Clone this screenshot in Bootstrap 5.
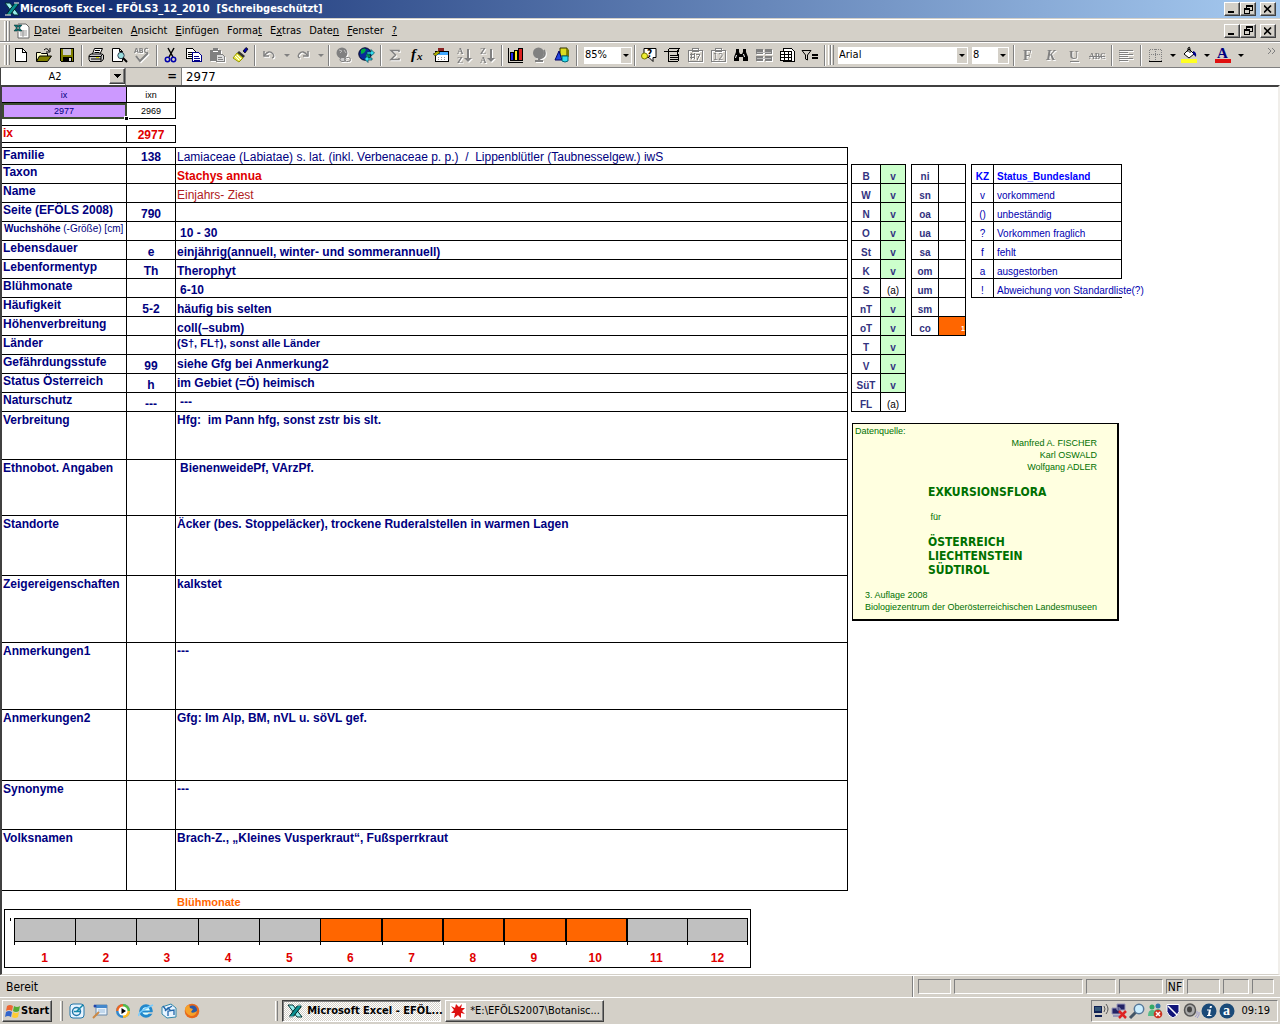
<!DOCTYPE html>
<html lang="de">
<head>
<meta charset="utf-8">
<meta name="viewport" content="width=device-width, initial-scale=1">
<title>Microsoft Excel - EFÖLS3_12_2010 [Schreibgeschützt]</title>
<link rel="stylesheet" href="https://cdn.jsdelivr.net/npm/bootstrap@5.3.0/dist/css/bootstrap.min.css">
<style>
:root{--face:#d4d0c8;--shade:#808080;--navy:#000080;--ui:"DejaVu Sans Condensed","DejaVu Sans",sans-serif;--cell:"Liberation Sans",Arial,sans-serif}
body{font-family:var(--ui);font-size:11px;line-height:14px;color:#000;background:var(--face)}
button,input,select{font:inherit;color:inherit;border-radius:0}
svg{display:block;flex:none}
.ico{width:16px;height:16px;overflow:visible}
.px{shape-rendering:crispEdges}
.titlebar{height:19px;background:linear-gradient(90deg,#0a246a,#a6caf0);border-bottom:1px solid var(--face);color:#fff;font-weight:700;white-space:pre}
.menubar{height:23px;border-top:1px solid #fff;border-bottom:1px solid var(--shade)}
.menubar a{color:#000;text-decoration:none}
.toolbars{height:26px;border-top:1px solid #fff;border-bottom:1px solid var(--shade)}
.grip{width:3px;height:20px;border-left:1px solid #fff;border-right:1px solid var(--shade);flex:none}
.tool{width:23px;height:22px;padding:0 4px 0 3px;border:0;background:none;flex:none}
.tool.off svg{filter:drop-shadow(1px 1px 0 #fff);color:var(--shade)}
.drop{width:11px;height:22px;padding:0;border:0;background:none;flex:none}
.drop.off{color:var(--shade)}
.drop::before,.pick::after{content:"";display:block;margin:0 auto;border:3px solid transparent;border-top-color:currentColor;border-bottom:0;width:0}
.vsep{width:2px;height:21px;margin:0 2px;border-left:1px solid var(--shade);border-right:1px solid #fff;flex:none}
.pick{position:relative;height:17px;background:#fff;border:1px solid #fff}
.pick select{appearance:none;border:0;background:none;padding:0;outline:0;min-width:0}
.pick::before{content:"";position:absolute;right:0;top:0;width:10px;height:15px;background:var(--face)}
.pick::after{position:absolute;right:2px;top:6px}
.pick-zoom{width:48px}
.pick-font{width:130px}
.pick-size{width:37px}
.winbtn{width:16px;height:14px;padding:0;background:var(--face);border:1px solid;border-color:#fff #404040 #404040 #fff;box-shadow:inset -1px -1px var(--shade);color:#000;display:flex;align-items:center;justify-content:center}
.formula{height:17px;background:#fff}
.formula input{border:0;outline:0;padding:0;background:#fff;min-width:0}
.namebox{width:126px;border-left:1px solid #404040;border-right:1px solid var(--shade)}
.namebox .winbtn{width:16px;height:16px}
.eq{width:56px;background:var(--face);border-right:1px solid var(--shade);font:700 13px/16px var(--ui)}
.fx{font-size:13px}
.sheet{background:#fff;border-style:solid;border-width:2px 2px 1px;border-color:#404040 #f0eeea #d4d0c8 #404040;font-family:var(--cell);font-size:12px;color:var(--navy)}
.grid{border-collapse:separate;border-spacing:0;table-layout:fixed}
.grid td,.grid th{border:0 solid #000;border-width:0 1px 1px 0;padding:0;line-height:14px;height:19px;white-space:nowrap;font-weight:700;vertical-align:bottom}
.grid.topline tr:first-child>*{border-top-width:1px}
.grid.leftline tr>:first-child{border-left-width:1px}
.c1{width:125px}.c2{width:49px}
.head td{height:16px;font-size:9px;font-weight:400;text-align:center;color:#000;vertical-align:middle}
.head .lilac{background:#c9f;color:var(--navy)}
.head .cursor{position:relative;outline:2px solid #3c4c30;outline-offset:-2px}
.cursor::after{content:"";position:absolute;right:-3px;bottom:-3px;width:5px;height:5px;background:#000;border:1px solid #fff}
.key{margin-top:6px}
.record th{vertical-align:top;padding-left:1px}
.record td:nth-child(2){text-align:center}
.record td:nth-child(3){padding-left:1px}
.record .tall>*{vertical-align:top;padding-top:1px}
.record .mid td:nth-child(3){vertical-align:middle}
.record td.in1{padding-left:4px}
.record .first>*,.key td,.key th{height:18px}
.red{color:#e00000}
.record .plain{color:var(--navy);font-weight:400}
.record .plain.red{color:#b02020}
.record .fine{font-size:10px;padding-left:2px}
.record .note{font-size:11px}
.side{width:430px;padding-top:77px}
.lists{gap:5px;margin-left:3px}
.codes td,.codes th{text-align:center;font-size:10px;color:#333380;line-height:13px}
.codes td{width:25px}
.codes th{width:30px}
.zones td,.zones th{width:27px}
.zones th{width:28px}
.codes .yes{background:#cfc}
.codes .nil{font-weight:400;color:#000}
.codes .hit{background:#f60;color:#fff;font-size:7px;text-align:right}
.codes tr:first-child>*,.legend thead th{height:20px}
.legend{width:151px}
.legend td,.legend th{font-size:10px;line-height:13px;color:#0000b0;font-weight:400;padding-left:3px}
.legend tr>:first-child{width:23px;text-align:center;padding:0}
.legend thead th{font-weight:700;color:#00f;border-top-width:1px}
.source{width:267px;height:198px;margin:11px 0 0 4px;background:#ffffe0;border:1px solid #000;border-width:1px 2px 2px 1px;color:#007000;font-size:9px;line-height:12px;padding:1px 12px 0 2px}
.source .big{font:700 12px/14px var(--ui)}
.pub{padding-left:73px}
.pub>*{margin-top:12px}
.imprint{padding:12px 0 0 10px;white-space:nowrap}
.months{margin:0 97px 0 2px;height:59px;border:1px solid #000;padding:8px 2px 0 9px;position:relative}
.month{flex:1 1 0;text-align:center;color:#e00000;font-weight:700}
.month span{display:block;height:24px;border:1px solid #000;border-right-width:0;background:silver;margin-bottom:9px;position:relative}
.month span::after{content:"";position:absolute;left:-1px;top:22px;width:1px;height:4px;background:#000}
.month:last-child span{border-right-width:1px}
.month:last-child span::before{content:"";position:absolute;right:-1px;top:22px;width:1px;height:4px;background:#000}
.month.on span{background:#f60}
.month.on + .month span{border-left-width:2px}
.months .tick{position:absolute;left:5px;top:8px;width:1px;height:3px;background:#000}
.orange{color:#f60;font-size:11px;font-weight:700;height:18px;padding:4px 0 0 175px}
.status{height:22px;border-top:1px solid #fff;font-size:12px;padding:0 3px 0 6px}
.panel{height:15px;border:1px solid;border-color:var(--shade) #fff #fff var(--shade);margin-right:3px;line-height:14px;text-align:center}
.taskbar{height:27px;border-top:1px solid #fff;padding:0 2px}
.task{height:22px;padding:0 4px;background:var(--face);border:1px solid;border-color:#fff #404040 #404040 #fff;box-shadow:inset -1px -1px var(--shade);white-space:nowrap}
.start{padding:0 2px}
.task.down{border-color:#404040 #fff #fff #404040;box-shadow:inset 1px 1px var(--shade);background:repeating-conic-gradient(#fff 0 25%,#d4d0c8 0 50%) 0 0/2px 2px;font-weight:700}
.slot{width:159px}
.quick{gap:7px;padding-left:6px}
.gapfill{max-width:75px}
.tray{height:22px;border:1px solid;border-color:var(--shade) #fff #fff var(--shade);padding:0 7px 0 1px;gap:2px}
</style>
</head>
<body class="d-flex flex-column min-vh-100">

<svg width="0" height="0" class="position-absolute" aria-hidden="true">
<defs>
<symbol id="xl" viewBox="0 0 16 16"><path d="M1 2h5l9 12h-5z" fill="#9ee" stroke="#033" /><path d="M14 2h-3L7 7 2 14h4l4-5 4-5z" fill="#0a8f8f" stroke="#022"/><path d="M1 14h6M10 2h5" stroke="#fff"/></symbol>
<symbol id="win" viewBox="0 0 9 9"><path d="M2.500 3V.5h6v5H6M2 1h7" fill="none" stroke="#000"/><path d="M.500 3.500h5v5h-5zM0 4h6" fill="none" stroke="#000"/></symbol>
</defs>
</svg>

<header>
<div class="titlebar d-flex align-items-center px-1">
<svg class="ico"><use href="#xl"/></svg><span class="flex-grow-1">Microsoft Excel - EFÖLS3_12_2010  [Schreibgeschützt]</span>
<button class="winbtn" aria-label="Minimieren"><svg class="px" width="8" height="8"><path d="M0 6h6v2H0z"/></svg></button><button class="winbtn me-1" aria-label="Wiederherstellen"><svg class="px" width="9" height="9"><use href="#win"/></svg></button><button class="winbtn" aria-label="Schließen"><svg width="8" height="8"><path d="M0 .5l7 7M7 .5l-7 7" stroke="#000" stroke-width="1.600"/></svg></button>
</div>

<nav class="menubar d-flex align-items-center pe-1" aria-label="Menü">
<span class="grip ms-1"></span><span class="grip"></span>
<svg class="ico ms-1"><path d="M4 1h8l3 3v11H4z" fill="#fff" stroke="#666"/><path d="M6 8h7M6 10h7M6 12h7M9 7v7" stroke="#999"/><path d="M0 2h3l5 6H5zM8 2H5L0 8h3z" fill="#077" stroke="#022" stroke-width=".5"/></svg>
<div class="d-flex flex-grow-1 gap-2 ps-1">
<a href="#"><u>D</u>atei</a><a href="#"><u>B</u>earbeiten</a><a href="#"><u>A</u>nsicht</a><a href="#"><u>E</u>infügen</a><a href="#">Forma<u>t</u></a><a href="#">E<u>x</u>tras</a><a href="#">Date<u>n</u></a><a href="#"><u>F</u>enster</a><a href="#"><u>?</u></a>
</div>
<button class="winbtn" aria-label="Mappe minimieren"><svg class="px" width="8" height="8"><path d="M0 6h6v2H0z"/></svg></button><button class="winbtn me-1" aria-label="Mappe wiederherstellen"><svg class="px" width="9" height="9"><use href="#win"/></svg></button><button class="winbtn" aria-label="Mappe schließen"><svg width="8" height="8"><path d="M0 .5l7 7M7 .5l-7 7" stroke="#000" stroke-width="1.600"/></svg></button>
</nav>

<div class="toolbars d-flex align-items-center" role="toolbar" aria-label="Symbolleisten">
<span class="grip ms-1"></span><span class="grip"></span>
<button class="tool" aria-label="Neu"><svg class="ico px"><path d="M2.500 1.500h7l4 4v9h-11z" fill="#fff" stroke="#000"/><path d="M9.500 1.500v4h4" fill="none" stroke="#000"/></svg></button>
<button class="tool" aria-label="Öffnen"><svg class="ico"><path d="M.5 14V5.500h4l1 1h6V9" fill="#ffc" stroke="#000"/><path d="M.5 14.500l3-5.500h12l-4 5.500z" fill="#808000" stroke="#000"/><path d="M8 3q3-3 5 1M14 1v4h-4" fill="none" stroke="#000"/></svg></button>
<button class="tool" aria-label="Speichern"><svg class="ico px"><path d="M1.500 1.500h13v13h-12l-1-1z" fill="#808000" stroke="#000"/><path d="M4 2h8v6H4z" fill="#ccc"/><path d="M4 10h9v4H4z" fill="#000"/><path d="M10 11h2v3h-2z" fill="#ddd"/></svg></button>
<span class="vsep"></span>
<button class="tool" aria-label="Drucken"><svg class="ico"><path d="M4.500 7l2-5.500h8L12 7" fill="#fff" stroke="#000"/><path d="M7 3.500h5M6.500 5.500h5" stroke="#000"/><path d="M1 8.500L3 7h11l1.500 1v4l-2 2.500H2l-1-2z" fill="#ccc" stroke="#000"/><path d="M1 9.500h12M3 12h10M13 9v5M15 7l-2 2" stroke="#000"/><path d="M8 10.500h3" stroke="#dd0"/></svg></button>
<button class="tool" aria-label="Seitenansicht"><svg class="ico"><path d="M1.500 1.500h7l3 3v10h-10zM8.500 1.500v3h3" fill="#fff" stroke="#000"/><circle cx="10" cy="8.500" r="3.200" fill="#9dd" stroke="#345"/><path d="M12 11l4 4" stroke="#000" stroke-width="2"/></svg></button>
<button class="tool off" aria-label="Rechtschreibung"><svg class="ico"><text x="0" y="6" font-size="7" font-weight="700" fill="#808080">ABC</text><path d="M2 9l4 5 8-8" fill="none" stroke="#808080" stroke-width="2"/></svg></button>
<span class="vsep"></span>
<button class="tool" aria-label="Ausschneiden"><svg class="ico" fill="none"><path d="M5 1l5 9M11 1l-5 9" stroke="#000" stroke-width="1.500"/><circle cx="4.500" cy="12.500" r="2.200" stroke="#00a" stroke-width="1.500"/><circle cx="10.500" cy="12.500" r="2.200" stroke="#00a" stroke-width="1.500"/></svg></button>
<button class="tool" aria-label="Kopieren"><svg class="ico px"><path d="M.5 1.500h6l3 3v7h-9z" fill="#fff" stroke="#000"/><path d="M2 5h5M2 7h5M2 9h5" stroke="#000"/><path d="M6.500 5.500h6l3 3v6h-9z" fill="#fff" stroke="#008"/><path d="M8 9.500h5M8 11.500h6M8 13h6" stroke="#008"/></svg></button>
<button class="tool off" aria-label="Einfügen"><svg class="ico px"><path d="M1 3h3V1h5v2h3v4H7v7H1z" fill="#808080"/><path d="M4 4h5" stroke="#fff"/><path d="M7.500 7.500h6l2 2v5h-8z" fill="#ddd" stroke="#808080"/><path d="M9 10.500h4M9 12.500h5" stroke="#808080"/></svg></button>
<button class="tool" aria-label="Format übertragen"><svg class="ico"><path d="M11 4l3-3.500 2 1.500-3 4z" fill="#00a" stroke="#000" stroke-width=".700"/><path d="M7 4l6 5-2 2-6-5z" fill="#333"/><path d="M5 6l6 5-4 4-6-4z" fill="#ee5" stroke="#990"/><path d="M3 9l4 4M5 8l4 4" stroke="#fff"/></svg></button>
<span class="vsep"></span>
<button class="tool off" aria-label="Rückgängig"><svg class="ico"><path d="M3 4v5h5" fill="none" stroke="#808080" stroke-width="1.500"/><path d="M3 9q5-7 9-2 2 3-1 4" fill="none" stroke="#808080" stroke-width="1.300"/></svg></button><button class="drop off" aria-label="Rückgängig-Liste"></button>
<button class="tool off" aria-label="Wiederholen"><svg class="ico"><path d="M13 4v5H8" fill="none" stroke="#808080" stroke-width="1.500"/><path d="M13 9Q8 2 4 7q-2 3 1 4" fill="none" stroke="#808080" stroke-width="1.300"/></svg></button><button class="drop off" aria-label="Wiederholen-Liste"></button>
<span class="vsep"></span>
<button class="tool off" aria-label="Hyperlink"><svg class="ico"><circle cx="7" cy="6" r="5.500" fill="#808080"/><path d="M4 3l3 1-2 2M9 3l2 3" stroke="#bbb" fill="none"/><rect x="5" y="10.500" width="6" height="4" rx="2" fill="#ccc" stroke="#808080"/><rect x="9.500" y="10.500" width="6" height="4" rx="2" fill="none" stroke="#808080"/></svg></button>
<button class="tool" aria-label="Web-Symbolleiste"><svg class="ico"><circle cx="7" cy="7" r="6.200" fill="#0a2a9a" stroke="#002"/><path d="M3 3q4-3 5 0L6 6 3 7zM8 8l3-2 1 4-3 2z" fill="#0a4"/><path d="M9 5h4V2.500L16.500 6 13 9V7H9zM14 11h-4V8.500L6.500 12l3.500 3.500V13h4z" fill="#3de" stroke="#045" stroke-width=".700"/></svg></button>
<span class="vsep"></span>
<button class="tool off" aria-label="AutoSumme"><svg class="ico"><path d="M12 5V3.500H4L8.500 8 4 12.500h8V11" fill="none" stroke="#808080" stroke-width="1.500"/></svg></button>
<button class="tool" aria-label="Funktion einfügen"><svg class="ico"><text x="1" y="12" font-family="Liberation Serif" font-size="15" font-weight="700" font-style="italic">f</text><text x="7" y="13" font-family="Liberation Serif" font-size="11" font-weight="700" font-style="italic">x</text></svg></button>
<button class="tool" aria-label="Datenquelle"><svg class="ico px"><path d="M2.500 4.500h13v10h-13z" fill="#fff" stroke="#000"/><path d="M3 5h12v3H3z" fill="#4af"/><path d="M5 10h9M5 12h9" stroke="#999" stroke-dasharray="1 2"/><path d="M5 1h6v3H5z" fill="#822"/><path d="M0 7l5-3 2 2-5 3z" fill="#aa0" stroke="#000" stroke-width=".500"/></svg></button>
<button class="tool off" aria-label="Aufsteigend sortieren"><svg class="ico" fill="#808080"><text x="1" y="7" font-size="9" font-family="Liberation Serif" font-weight="700">A</text><text x="1" y="16" font-size="9" font-family="Liberation Serif" font-weight="700">Z</text><path d="M11 2h2v9h3l-4 4-4-4h3z"/></svg></button>
<button class="tool off" aria-label="Absteigend sortieren"><svg class="ico" fill="#808080"><text x="1" y="7" font-size="9" font-family="Liberation Serif" font-weight="700">Z</text><text x="1" y="16" font-size="9" font-family="Liberation Serif" font-weight="700">A</text><path d="M11 2h2v9h3l-4 4-4-4h3z"/></svg></button>
<span class="vsep"></span>
<button class="tool" aria-label="Diagramm-Assistent"><svg class="ico px"><path d="M.500 1v14H15" stroke="#000" fill="none"/><path d="M2.500 5.500h3v8h-3z" fill="#22e" stroke="#000"/><path d="M6.500 3.500h3v10h-3z" fill="#fe2" stroke="#000"/><path d="M10.500 1.500h4v12h-4z" fill="#d22" stroke="#000"/></svg></button>
<button class="tool off" aria-label="Karte"><svg class="ico"><circle cx="7.500" cy="6" r="5.500" fill="#808080"/><path d="M13 3q3 7-5 9v2H4h8" stroke="#808080" stroke-width="2" fill="none"/></svg></button>
<button class="tool" aria-label="Zeichnen"><svg class="ico"><path d="M6 1h7v8H6z" fill="#dd2" stroke="#330"/><path d="M13 1l2 2v7l-2-1z" fill="#770"/><path d="M1 13l4-9 3 9z" fill="#24d" stroke="#006"/><path d="M8 9h6v5q-3 2-6 0z" fill="#3de" stroke="#067"/></svg></button>
<span class="vsep"></span>
<label class="pick pick-zoom d-flex flex-shrink-0 ms-1"><select class="w-100" aria-label="Zoom"><option>85%</option></select></label>
<span class="vsep"></span>
<button class="tool" aria-label="Office-Assistent"><svg class="ico"><path d="M3 1.500h12v9h-3v4l-4-4H3z" fill="#fff" stroke="#000"/><text x="6" y="10" font-size="10" font-weight="700">?</text><circle cx="3.500" cy="9" r="3" fill="#ee3" stroke="#770"/></svg></button>
<button class="tool" aria-label="Berichts-Manager"><svg class="ico px" fill="none" stroke="#000"><path d="M0 4.500h15M4.500 2v13M5 1.500h10l-2 4v2h2l-1 7H5M6 8h8M6 10h8M6 12h8"/></svg></button>
<button class="tool off" aria-label="Aufgabe"><svg class="ico px"><path d="M1 3.500h14v11H1zM5 1h6v3H5z" fill="none" stroke="#808080"/><path d="M3 7h5M3 10h5M4.500 6v6M7 6v6M9 7h4l-3 6" fill="none" stroke="#808080"/></svg></button>
<button class="tool off" aria-label="Datum"><svg class="ico px"><path d="M1 3.500h14v11H1zM5 1h6v3H5z" fill="none" stroke="#808080"/><text x="3" y="13" font-size="9" fill="#808080">12</text></svg></button>
<button class="tool" aria-label="Suchen"><svg class="ico"><path d="M3 2h3v3l1 2h2l1-2V2h3v3l2 5v4h-5v-4H6v4H1v-4l2-5z"/><path d="M3.500 8l-1 3M10.500 7l1 3" stroke="#fff"/></svg></button>
<button class="tool off" aria-label="Fenster fixieren"><svg class="ico px"><path d="M0 2h7v5H0zM9 2h7v5H9zM0 9h7v5H0zM9 9h7v5H9z" fill="#808080"/><path d="M1 5h14M1 11h14" stroke="#bbb"/></svg></button>
<button class="tool" aria-label="PivotTable"><svg class="ico px"><path d="M4.500 1.500h8l3 3v10h-11z" fill="#fff" stroke="#000"/><path d="M1.500 4.500h11v9h-11z" fill="#fff" stroke="#000"/><path d="M2 7.500h11M2 10.500h11M5.500 5v9M9.500 5v9" stroke="#000"/></svg></button>
<button class="tool" aria-label="AutoFilter"><svg class="ico"><path d="M0 3.500h9L5.500 8v5l-2-1V8z" fill="none" stroke="#000"/><path d="M10 8h6M10 11h6" stroke="#000" stroke-width="2"/></svg></button>
<span class="vsep"></span><span class="grip"></span><span class="grip"></span>
<label class="pick pick-font d-flex ms-1 flex-shrink-0"><select class="w-100" aria-label="Schriftart"><option>Arial</option></select></label>
<label class="pick pick-size d-flex ms-1 flex-shrink-0"><select class="w-100" aria-label="Schriftgröße"><option>8</option></select></label>
<span class="vsep ms-1"></span>
<button class="tool off" aria-label="Fett"><svg class="ico" fill="#808080"><text x="3" y="13" font-size="14" font-family="Liberation Serif" font-weight="700">F</text></svg></button>
<button class="tool off" aria-label="Kursiv"><svg class="ico" fill="#808080"><text x="3" y="13" font-size="14" font-family="Liberation Serif" font-weight="700" font-style="italic">K</text></svg></button>
<button class="tool off" aria-label="Unterstrichen"><svg class="ico" fill="#808080"><text x="3" y="12" font-size="13" font-family="Liberation Serif" font-weight="700">U</text><path d="M4 14h9v1H4z"/></svg></button>
<button class="tool off" aria-label="Durchgestrichen"><svg class="ico" fill="#808080"><text x="0" y="12" font-size="8" font-family="Liberation Serif" font-weight="700">ABC</text><path d="M0 9h16v1H0z"/></svg></button>
<span class="vsep"></span>
<button class="tool off" aria-label="Linksbündig"><svg class="ico px" stroke="#808080"><path d="M1 3.500h14M1 5.500h9M1 7.500h14M1 9.500h9M1 11.500h14M1 13.500h9"/></svg></button>
<span class="vsep"></span>
<button class="tool" aria-label="Rahmen"><svg class="ico px" fill="none"><path d="M2.500 2.500h12v11M2.500 2.500v11M8.500 2v11M2 7.500h13" stroke="#808080" stroke-dasharray="1 1"/><path d="M2 14.500h13" stroke="#000"/></svg></button><button class="drop" aria-label="Rahmen-Liste"></button>
<button class="tool" aria-label="Füllfarbe"><svg class="ico"><path d="M3 7l5-5 5 5-5 4z" fill="#fff" stroke="#000"/><path d="M7 5V1q2-2 2 1v4" fill="none" stroke="#000"/><path d="M12 4q4 1 3 6l-3-3z" fill="#008"/><path d="M0 12h16v4H0z" fill="#ff2"/></svg></button><button class="drop" aria-label="Füllfarbe-Liste"></button>
<button class="tool" aria-label="Schriftfarbe"><svg class="ico"><text x="2" y="11" font-size="15" font-family="Liberation Serif" font-weight="700" fill="#000080">A</text><path d="M0 12h16v4H0z" fill="#e01010"/></svg></button><button class="drop" aria-label="Schriftfarbe-Liste"></button>
<svg class="ms-auto me-1 mb-2" width="8" height="8" fill="none" stroke="#808080"><path d="M0 1l3 3-3 3M4 1l3 3-3 3"/></svg>
</div>

<div class="formula d-flex">
<div class="namebox d-flex flex-shrink-0"><input class="flex-grow-1 text-center w-100" aria-label="Namenfeld" value="A2" size="5"><button class="winbtn flex-shrink-0" aria-label="Namenliste"><svg class="px" width="7" height="4"><path d="M0 0h7L3.500 4z"/></svg></button></div>
<div class="eq text-end pe-1 flex-shrink-0">=</div>
<input class="fx flex-grow-1 ps-1" aria-label="Bearbeitungsleiste" value="2977">
</div>
</header>

<main class="sheet flex-grow-1 d-flex align-items-start">
<div class="flex-grow-1">
<table class="grid head"><tr><td class="c1 lilac">ix</td><td class="c2">ixn</td></tr><tr><td class="c1 lilac cursor">2977</td><td class="c2">2969</td></tr></table>
<table class="grid record key topline red"><tr><th class="c1" scope="row">ix</th><td class="c2">2977</td></tr></table>
<table class="grid record topline w-100 mt-1">
<colgroup><col class="c1"><col class="c2"><col></colgroup>
<tr class="first"><th scope="row">Familie</th><td>138</td><td class="plain">Lamiaceae (Labiatae) s. lat. (inkl. Verbenaceae p. p.)&nbsp; /&nbsp; Lippenblütler (Taubnesselgew.) iwS</td></tr>
<tr><th scope="row">Taxon</th><td></td><td class="red">Stachys annua</td></tr>
<tr><th scope="row">Name</th><td></td><td class="plain red">Einjahrs- Ziest</td></tr>
<tr><th scope="row">Seite (EFÖLS 2008)</th><td>790</td><td></td></tr>
<tr><th scope="row" class="fine">Wuchshöhe <span class="fw-normal">(-Größe) [cm]</span></th><td></td><td class="in1">10 - 30</td></tr>
<tr><th scope="row">Lebensdauer</th><td>e</td><td>einjährig(annuell, winter- und sommerannuell)</td></tr>
<tr><th scope="row">Lebenformentyp</th><td>Th</td><td>Therophyt</td></tr>
<tr><th scope="row">Blühmonate</th><td></td><td class="in1">6-10</td></tr>
<tr><th scope="row">Häufigkeit</th><td>5-2</td><td>häufig bis selten</td></tr>
<tr><th scope="row">Höhenverbreitung</th><td></td><td>coll(–subm)</td></tr>
<tr><th scope="row">Länder</th><td></td><td class="align-top note">(S†, FL†), sonst alle Länder</td></tr>
<tr class="mid"><th scope="row">Gefährdungsstufe</th><td>99</td><td>siehe Gfg bei Anmerkung2</td></tr>
<tr class="mid"><th scope="row">Status Österreich</th><td>h</td><td>im Gebiet (=Ö) heimisch</td></tr>
<tr class="mid"><th scope="row">Naturschutz</th><td>---</td><td class="in1">---</td></tr>
<tr class="tall"><th scope="row" style="height:48px">Verbreitung</th><td></td><td>Hfg:&nbsp; im Pann hfg, sonst zstr bis slt.</td></tr>
<tr class="tall"><th scope="row" style="height:56px">Ethnobot. Angaben</th><td></td><td class="in1">BienenweidePf, VArzPf.</td></tr>
<tr class="tall"><th scope="row" style="height:60px">Standorte</th><td></td><td>Äcker (bes. Stoppeläcker), trockene Ruderalstellen in warmen Lagen</td></tr>
<tr class="tall"><th scope="row" style="height:67px">Zeigereigenschaften</th><td></td><td>kalkstet</td></tr>
<tr class="tall"><th scope="row" style="height:67px">Anmerkungen1</th><td></td><td>---</td></tr>
<tr class="tall"><th scope="row" style="height:71px">Anmerkungen2</th><td></td><td>Gfg: Im Alp, BM, nVL u. söVL gef.</td></tr>
<tr class="tall"><th scope="row" style="height:49px">Synonyme</th><td></td><td>---</td></tr>
<tr class="tall"><th scope="row" style="height:61px">Volksnamen</th><td></td><td>Brach-Z., „Kleines Vusperkraut“, Fußsperrkraut</td></tr>
</table>
<div class="orange">Blühmonate</div>
<div class="months d-flex"><i class="tick"></i>
<div class="month"><span></span>1</div><div class="month"><span></span>2</div><div class="month"><span></span>3</div><div class="month"><span></span>4</div><div class="month"><span></span>5</div><div class="month on"><span></span>6</div><div class="month on"><span></span>7</div><div class="month on"><span></span>8</div><div class="month on"><span></span>9</div><div class="month on"><span></span>10</div><div class="month"><span></span>11</div><div class="month"><span></span>12</div>
</div>
</div>

<aside class="side flex-shrink-0">
<div class="d-flex align-items-start lists">
<table class="grid codes topline leftline">
<tr><th scope="row">B</th><td class="yes">v</td></tr><tr><th scope="row">W</th><td class="yes">v</td></tr><tr><th scope="row">N</th><td class="yes">v</td></tr><tr><th scope="row">O</th><td class="yes">v</td></tr><tr><th scope="row">St</th><td class="yes">v</td></tr><tr><th scope="row">K</th><td class="yes">v</td></tr><tr><th scope="row">S</th><td class="nil">(a)</td></tr><tr><th scope="row">nT</th><td class="yes">v</td></tr><tr><th scope="row">oT</th><td class="yes">v</td></tr><tr><th scope="row">T</th><td class="yes">v</td></tr><tr><th scope="row">V</th><td class="yes">v</td></tr><tr><th scope="row">SüT</th><td class="yes">v</td></tr><tr><th scope="row">FL</th><td class="nil">(a)</td></tr>
</table>
<table class="grid codes zones topline leftline">
<tr><th scope="row">ni</th><td></td></tr><tr><th scope="row">sn</th><td></td></tr><tr><th scope="row">oa</th><td></td></tr><tr><th scope="row">ua</th><td></td></tr><tr><th scope="row">sa</th><td></td></tr><tr><th scope="row">om</th><td></td></tr><tr><th scope="row">um</th><td></td></tr><tr><th scope="row">sm</th><td></td></tr><tr><th scope="row">co</th><td class="hit">1</td></tr>
</table>
<table class="grid legend leftline">
<thead><tr><th>KZ</th><th>Status_Bundesland</th></tr></thead>
<tbody><tr><td>v</td><td>vorkommend</td></tr><tr><td>()</td><td>unbeständig</td></tr><tr><td>?</td><td>Vorkommen fraglich</td></tr><tr><td>f</td><td>fehlt</td></tr><tr><td>a</td><td>ausgestorben</td></tr><tr><td>!</td><td class="border-end-0">Abweichung von Standardliste(?)</td></tr></tbody>
</table>
</div>
<section class="source">
<div>Datenquelle:</div>
<div class="text-end pe-2">Manfred A. FISCHER<br>Karl OSWALD<br>Wolfgang ADLER</div>
<div class="pub">
<div class="big">EXKURSIONSFLORA</div>
<div>&nbsp;für</div>
<div class="big">ÖSTERREICH<br>LIECHTENSTEIN<br>SÜDTIROL</div>
</div>
<div class="imprint">3. Auflage 2008<br>Biologiezentrum der Oberösterreichischen Landesmuseen</div>
</section>
</aside>
</main>

<footer>
<div class="status d-flex align-items-center"><span class="flex-grow-1">Bereit</span><span class="vsep me-1"></span>
<span class="panel" style="width:33px"></span><span class="panel" style="width:129px"></span><span class="panel" style="width:30px"></span><span class="panel" style="width:44px"></span><span class="panel" style="width:18px">NF</span><span class="panel" style="width:33px"></span><span class="panel" style="width:26px"></span><span class="panel" style="width:22px"></span></div>
<div class="taskbar d-flex align-items-center">
<button class="task start d-flex align-items-center fw-bold"><svg class="ico"><path d="M2 3q3-2 6 0L7 8q-3-2-6 0z" fill="#e63"/><path d="M9 3q3 2 6 0l-1 5q-3 2-6 0z" fill="#5a3"/><path d="M1 9q3-2 6 0l-1 5q-3-2-6 0z" fill="#36c"/><path d="M8 9q3 2 6 0l-1 5q-3 2-6 0z" fill="#fc3"/></svg>Start</button>
<span class="grip ms-2"></span>
<div class="quick d-flex">
<svg class="ico"><rect x="1" y="1" width="14" height="14" rx="3" fill="#e8f4ff" stroke="#27a"/><circle cx="7.500" cy="8.500" r="4" fill="none" stroke="#27a" stroke-width="1.500"/><path d="M7 9l7-7M5 8.500h6" stroke="#18a" stroke-width="1.500"/></svg>
<svg class="ico"><path d="M4 2h11v10H4z" fill="#e8f2fb" stroke="#68a"/><path d="M4 2h11v3H4z" fill="#48c"/><path d="M6 7h7M6 9h7" stroke="#9bd"/><path d="M1 15l6-6" stroke="#c84" stroke-width="2"/><circle cx="3" cy="3" r="1.500" fill="#24a"/></svg>
<svg class="ico"><circle cx="8" cy="8" r="7" fill="#38c"/><path d="M8 8V1a7 7 0 0 1 7 7z" fill="#5b4"/><path d="M8 8h7a7 7 0 0 1-7 7z" fill="#fb2"/><path d="M8 8H1a7 7 0 0 1 7-7z" fill="#e62"/><circle cx="8" cy="8" r="4.500" fill="#fff"/><path d="M6.500 5l4.500 3-4.500 3z"/></svg>
<svg class="ico"><circle cx="8" cy="8" r="5.300" fill="#dff" stroke="#28c" stroke-width="3"/><path d="M4 8.500h9" stroke="#28c" stroke-width="2"/><path d="M1 13Q-1 9 15 2" fill="none" stroke="#7cf" stroke-width="1.500"/><path d="M10 10h6" stroke="#d4d0c8" stroke-width="1.500"/></svg>
<svg class="ico"><path d="M1 4l9-3 5 4v9l-9 1-5-4z" fill="#e8f4ff" stroke="#38a"/><path d="M2 3l3 4 6-4M7 13V8l6-1v5M4 8l3-3 3 3" fill="none" stroke="#26a" stroke-width="1.300"/></svg>
<svg class="ico"><circle cx="8" cy="8" r="7.300" fill="#e7681c"/><circle cx="8.500" cy="7" r="4.500" fill="#2a5aa8"/><path d="M1 5q2-3 4-3l1 3 3 1-2 3q2 2 6-1-1 5-6 5-6-2-6-8z" fill="#f7a22a"/></svg>
</div>
<span class="flex-grow-1 gapfill"></span><span class="grip"></span>
<button class="task slot down d-flex align-items-center ms-1"><svg class="ico me-1"><use href="#xl"/></svg>Microsoft Excel - EFÖL...</button>
<button class="task slot d-flex align-items-center ms-1"><svg class="ico me-1"><path d="M0 0h16v16H0z" fill="#fff"/><path d="M6 1l3 3 3-3-1 4 4 0-3 3 3 3-4-1 0 5-3-3-4 3 1-5-4 0 3-3-3-4 4 2z" fill="#d11"/></svg>*E:\EFÖLS2007\Botanisc...</button>
<span class="ms-auto"></span>
<div class="tray d-flex align-items-center">
<svg class="ico"><path d="M1 3h8v7H1zM2 12h7v2H2z" fill="#125"/><path d="M2 4h6v4H2z" fill="#357"/><path d="M11 3q2 3 0 6M13 1q4 5 0 10" stroke="#555" fill="none"/></svg>
<svg class="ico"><path d="M6 1h8v6H6zM1 5h8v6H1z" fill="#226" stroke="#99b"/><path d="M2 13h7" stroke="#99b" stroke-width="2"/><path d="M8 8l7 7M15 8l-7 7" stroke="#d22" stroke-width="2.500"/></svg>
<svg class="ico"><path d="M1 15l6-6" stroke="#456" stroke-width="3"/><circle cx="10" cy="6" r="4.700" fill="#cef" stroke="#579" stroke-width="1.500"/></svg>
<svg class="ico"><circle cx="5" cy="4" r="2.500" fill="#3a6"/><circle cx="11" cy="3" r="2.500" fill="#37a"/><path d="M1 13q0-7 5-6 4 0 4 6zM8 7q6-3 7 4H9z" fill="#5b8"/><circle cx="11" cy="11" r="4.300" fill="#c32"/><path d="M9 9l4 4M13 9l-4 4" stroke="#fff" stroke-width="1.500"/></svg>
<svg class="ico"><path d="M2 1.500h12v7q-1 4-6 6.500-5-2.500-6-6.500z" fill="#11157a" stroke="#fff"/><path d="M3 3l9 9" stroke="#fff" stroke-width="1.500"/></svg>
<svg class="ico"><ellipse cx="7" cy="7" rx="5.500" ry="6" fill="#aaa" stroke="#555" stroke-width="1.500"/><ellipse cx="6.500" cy="6.500" rx="2.500" ry="3" fill="#444"/><path d="M12 14q3-2 2-6M14 15q3-3 2-6" stroke="#99c" fill="none"/></svg>
<svg class="ico"><circle cx="8" cy="8" r="7.500" fill="#1a4a78"/><path d="M9 3h2l-.5 2h-2zM6 6.500h4l-1 5.500h1.500v1H6V12h1l.8-4.500H6z" fill="#fff"/></svg>
<svg class="ico"><circle cx="8" cy="8" r="7.500" fill="#1a4a78"/><text x="4" y="12" font-family="Liberation Serif" font-size="14" font-weight="700" fill="#fff">a</text></svg>
<time class="ps-1">09:19</time>
</div>
</div>
</footer>
<script src="https://cdn.jsdelivr.net/npm/bootstrap@5.3.0/dist/js/bootstrap.bundle.min.js"></script>
</body>
</html>
